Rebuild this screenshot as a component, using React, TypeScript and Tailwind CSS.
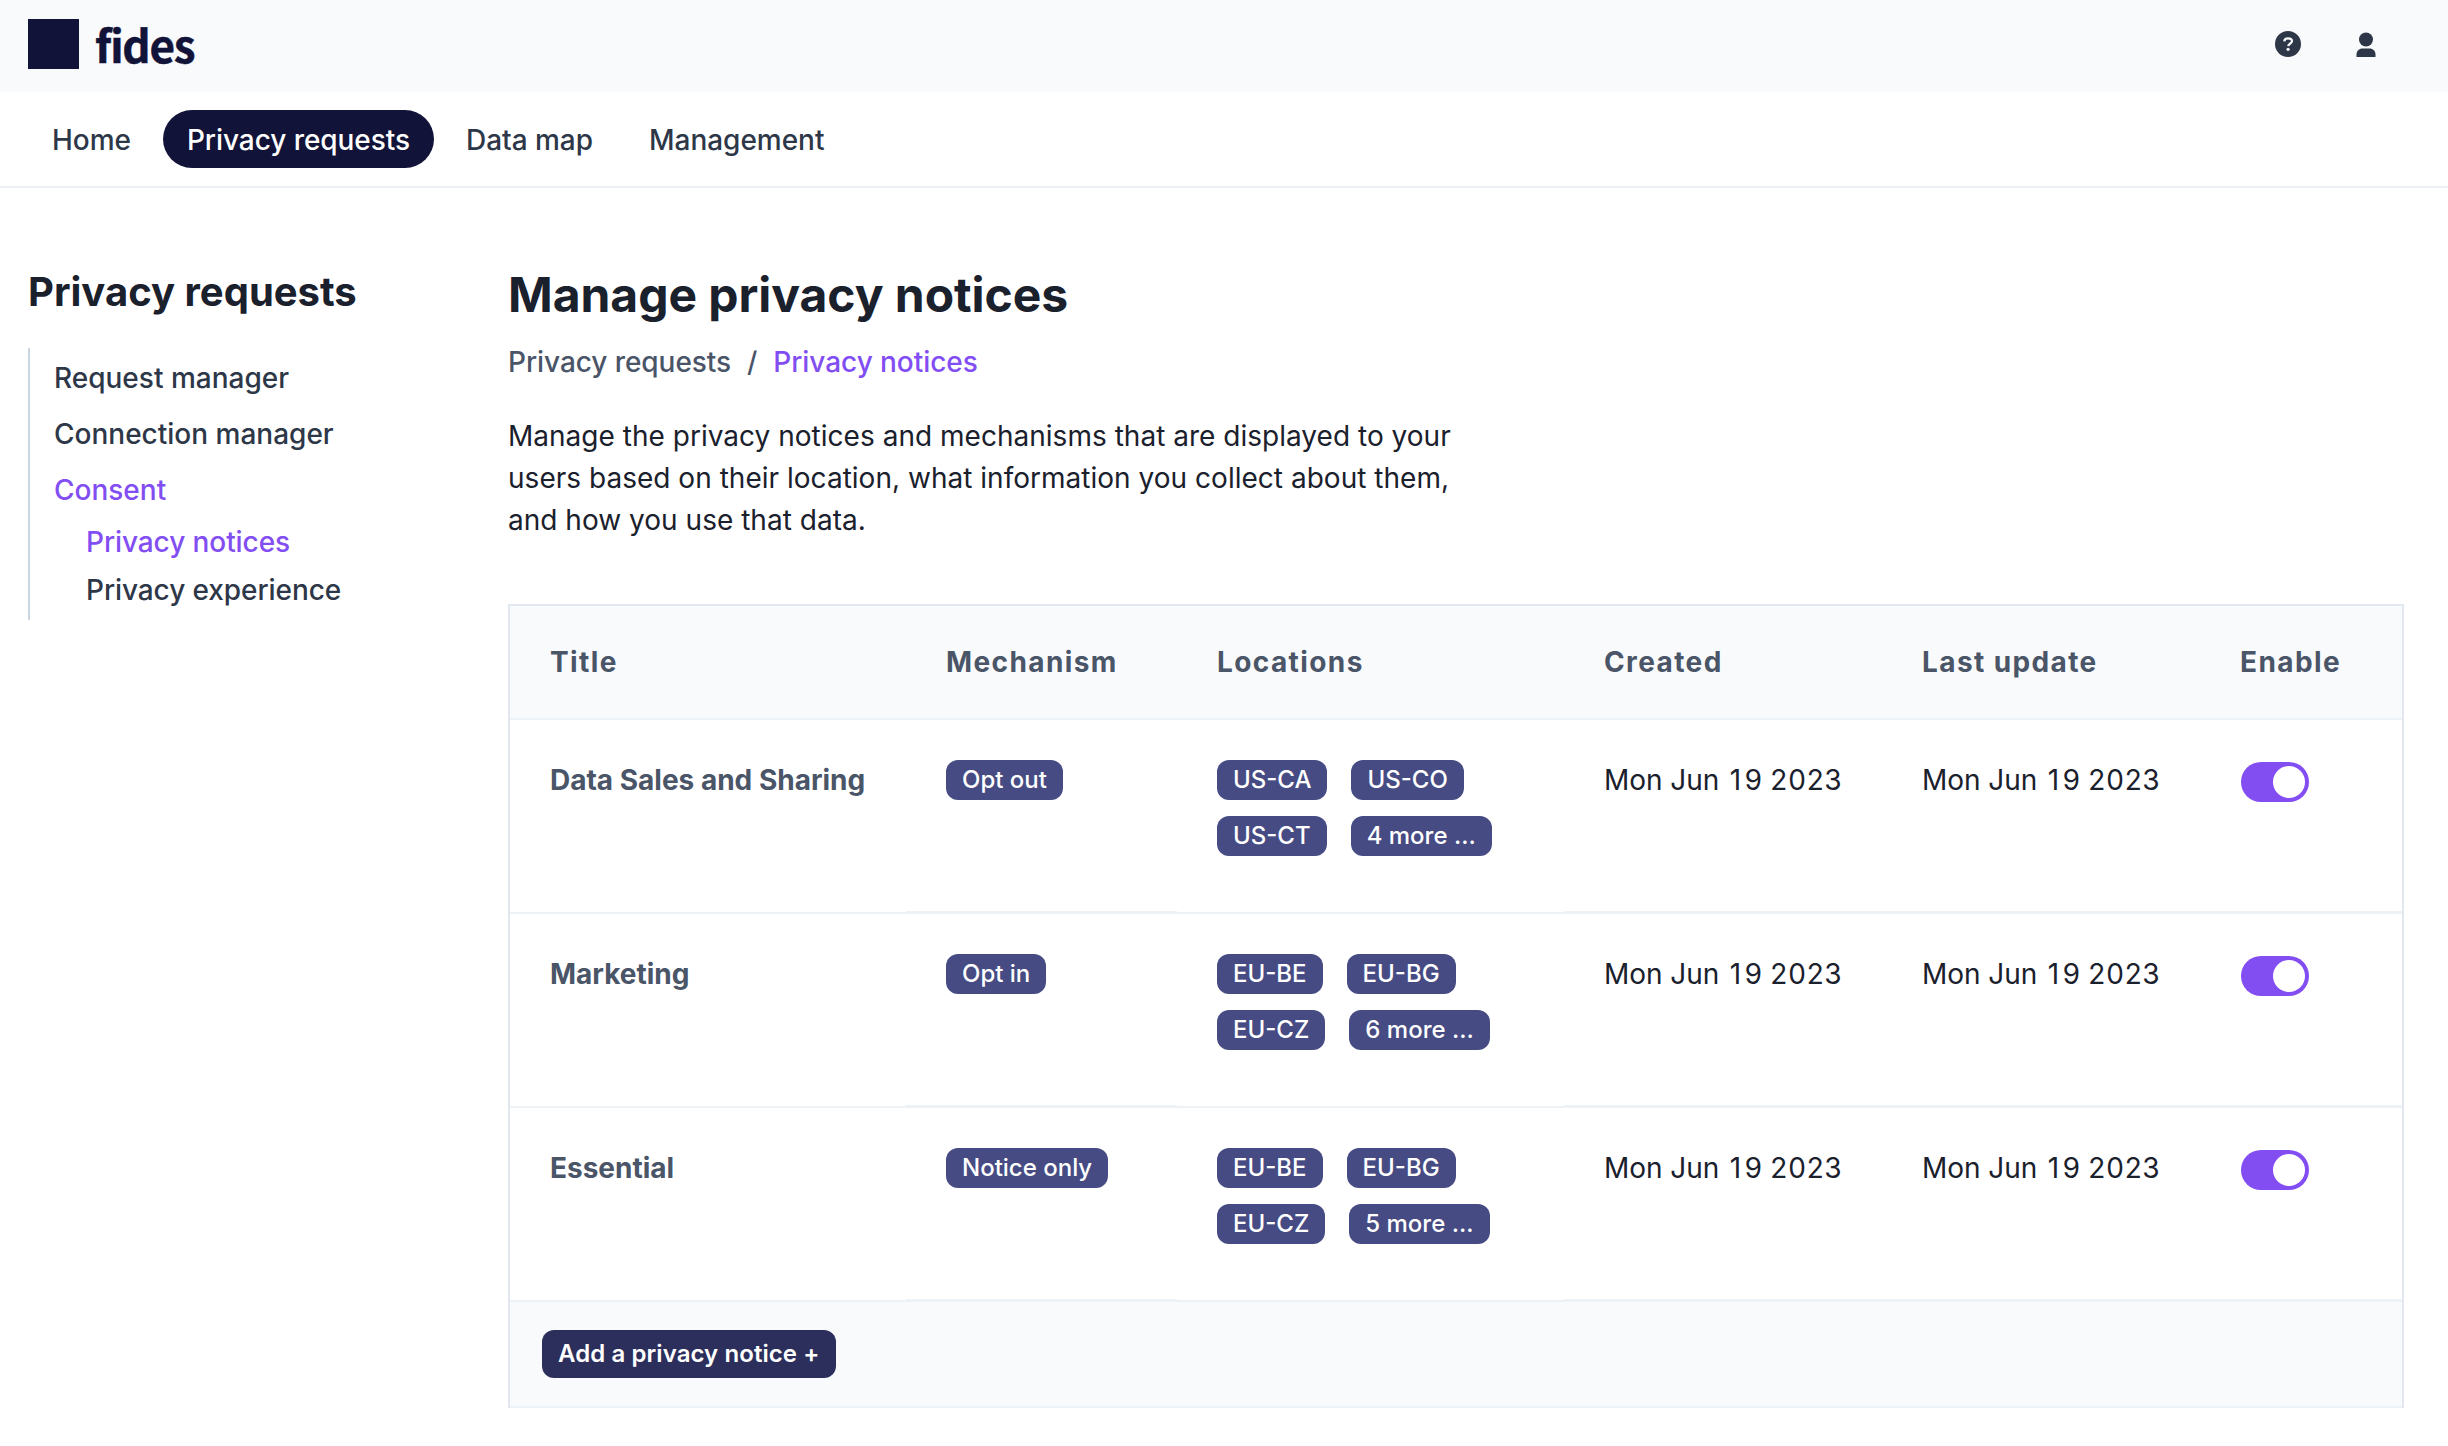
const navItems = ["Home", "Privacy requests", "Data map", "Management"];

const columns = ["Title", "Mechanism", "Locations", "Created", "Last update", "Enable"];

const notices = [
  {
    title: "Data Sales and Sharing",
    mechanism: "Opt out",
    locations: [["US-CA", "US-CO"], ["US-CT", "4 more ..."]],
  },
  {
    title: "Marketing",
    mechanism: "Opt in",
    locations: [["EU-BE", "EU-BG"], ["EU-CZ", "6 more ..."]],
  },
  {
    title: "Essential",
    mechanism: "Notice only",
    locations: [["EU-BE", "EU-BG"], ["EU-CZ", "5 more ..."]],
  },
];

const GRID = "grid grid-cols-[396px_271px_387px_318px_318px_202px]";

function QuestionIcon() {
  return (
    <svg viewBox="0 0 26 26" className="size-[26px]">
      <circle cx="13" cy="13" r="13" fill="#2d3748" />
      <path
        d="M9.2 10.3C9.4 8.4 10.9 7.4 13 7.4C15.3 7.4 17 8.4 17 10.3C17 12.5 13.4 12.5 13.2 15.2"
        fill="none"
        stroke="#f9fafc"
        strokeWidth="2.2"
      />
      <circle cx="13.1" cy="18.3" r="1.6" fill="#f9fafc" />
    </svg>
  );
}

function UserIcon() {
  return (
    <svg viewBox="0 0 20 26" className="mt-[2px] h-[26px] w-5" fill="#2d3748">
      <circle cx="10" cy="7.5" r="7" />
      <path d="M0.5 25V22.5C0.5 19 3 16.5 6.5 16.5H13.5C17 16.5 19.5 19 19.5 22.5V25Z" />
    </svg>
  );
}

function Badge({ children }: { children: string }) {
  return (
    <span className="h-10 rounded-[12px] bg-[#464b83] px-4 text-2xl leading-10 font-medium whitespace-nowrap text-white">
      {children}
    </span>
  );
}

/* Tabular figures, with the plain (unserifed) form of the digit one. */
function NoticeDate() {
  return (
    <div className="border-b border-[#edf2f7] leading-10 tabular-nums">
      Mon Jun <span className="px-[3px] normal-nums">1</span>9 2023
    </div>
  );
}

function Toggle() {
  return (
    <div className="mt-[2px] ml-px flex h-10 w-[68px] items-center justify-end rounded-full bg-[#824ef2] p-1">
      <div className="size-8 rounded-full bg-white" />
    </div>
  );
}

export default function App() {
  return (
    <div className="h-[1446px] w-[2448px] overflow-hidden bg-white font-['Inter',sans-serif] text-[28px] text-[#1a202c]">
      <header className="flex h-[92px] items-center justify-between bg-[#f9fafc] pr-[72px] pl-7">
        <div className="flex items-center gap-4">
          <div className="mb-1 h-[50px] w-[51px] bg-[#121338]" />
          <span className="mb-[5px] font-['Noto_Sans_CJK_SC',sans-serif] text-[44px] leading-[50px] font-bold tracking-[-1.2px] text-[#121338] [-webkit-text-stroke:0.5px_#121338]">
            fides
          </span>
        </div>
        <div className="mb-1 flex items-center gap-[55px]">
          <QuestionIcon />
          <UserIcon />
        </div>
      </header>

      <nav className="flex h-24 items-center gap-2 border-b-2 border-[#edf0f7] px-7 font-medium tracking-[-0.03px] text-[#2d3748]">
        {navItems.map((item) => (
          <a
            key={item}
            className={
              item === "Privacy requests"
                ? "h-[58px] rounded-full bg-[#121338] px-6 leading-[60px] tracking-[-0.06px] text-white"
                : "h-[58px] px-6 leading-[60px]"
            }
          >
            {item}
          </a>
        ))}
      </nav>

      <div className="flex">
        <aside className="w-[480px] pt-20 pl-7">
          <h2 className="text-[40px] leading-[48px] font-bold">Privacy requests</h2>
          <div className="mt-8 flex h-[272px] flex-col border-l-2 border-[#cbd5e0] pt-2 pl-6 font-medium text-[#2d3748]">
            <a className="h-14 leading-[44px]">Request manager</a>
            <a className="h-14 leading-[44px]">Connection manager</a>
            <a className="h-[52px] leading-[44px] text-[#824ef2]">Consent</a>
            <a className="h-12 pl-8 leading-[44px] tracking-[-0.08px] text-[#824ef2]">Privacy notices</a>
            <a className="h-12 pl-8 leading-[44px] tracking-[-0.08px]">Privacy experience</a>
          </div>
        </aside>

        <main className="w-[1924px] pt-[79px] pl-7">
          <h1 className="text-[48px] leading-[56px] font-bold tracking-[-0.05px]">Manage privacy notices</h1>
          <div className="mt-[18px] flex gap-4 leading-[42px] font-medium tracking-[-0.06px] text-[#4a5568]">
            <span>Privacy requests</span>
            <span>/</span>
            <span className="text-[#824ef2]">Privacy notices</span>
          </div>
          <p className="mt-8 w-[960px] leading-[42px] tracking-[0.02px]">
            Manage the privacy notices and mechanisms that are displayed to your users based on their location, what
            information you collect about them, and how you use that data.
          </p>

          <div className="mt-[63px] border-x-2 border-t-2 border-[#e2e8f0]">
            <div className={`${GRID} h-[114px] border-b-2 border-[#edf2f7] bg-[#f9fafc]`}>
              {columns.map((column) => (
                <div key={column} className="pl-10 leading-[112px] font-bold tracking-[0.05em] whitespace-nowrap text-[#4a5568]">
                  {column}
                </div>
              ))}
            </div>
            {notices.map((notice) => (
              <div key={notice.title} className={`${GRID} h-[194px] border-b-2 border-[#edf2f7] *:pt-10 *:pl-10`}>
                <div className="leading-10 font-bold text-[#4a5568]">{notice.title}</div>
                <div className="flex items-start border-b border-[#edf2f7]">
                  <Badge>{notice.mechanism}</Badge>
                </div>
                <div className="flex flex-col gap-4">
                  {notice.locations.map((pair) => (
                    <div key={pair[0]} className="flex gap-6">
                      <Badge>{pair[0]}</Badge>
                      <Badge>{pair[1]}</Badge>
                    </div>
                  ))}
                </div>
                <NoticeDate />
                <NoticeDate />
                <div className="border-b border-[#edf2f7]">
                  <Toggle />
                </div>
              </div>
            ))}
            <div className="flex h-[106px] items-center border-b-2 border-[#edf2f7] bg-[#f9fafc] pl-8">
              <button className="h-12 rounded-[12px] bg-[#2c2e5b] px-4 text-2xl leading-[48px] font-semibold tracking-[0.08px] text-white">
                Add a privacy notice +
              </button>
            </div>
          </div>
        </main>
      </div>
    </div>
  );
}
